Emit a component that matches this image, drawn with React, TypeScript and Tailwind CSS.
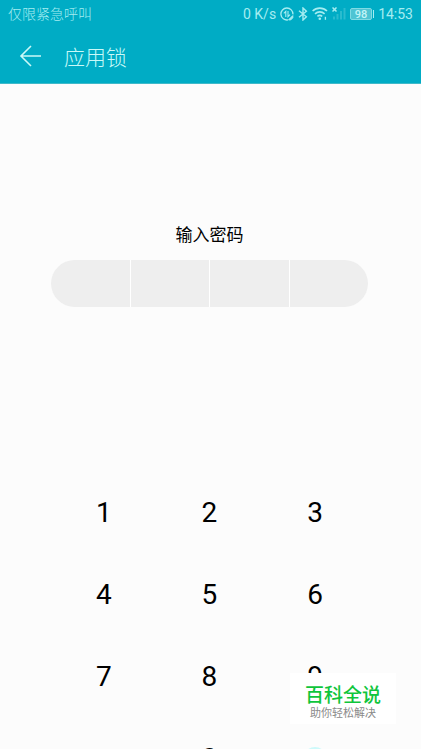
import { useState } from "react";

const DIGITS = ["1", "2", "3", "4", "5", "6", "7", "8", "9"];

const PIN_LENGTH = 4;

function DataIcon() {
  return (
    <svg width="14" height="14" viewBox="0 0 14 14" fill="none" stroke="currentColor" strokeWidth="1.3" aria-hidden="true">
      <path d="M12.9 7.4A6 6 0 1 0 8 12.9" />
      <path d="M5.8 10V4.4L3.8 6.4M8 4v5.6l2-2" strokeWidth="1.1" />
      <path d="M8.6 12.8l4.2-4.2v2.2l-2.2 2.2z" fill="currentColor" strokeWidth="1" />
    </svg>
  );
}

function BluetoothIcon() {
  return (
    <svg width="10" height="14" viewBox="0 0 10 14" fill="none" stroke="currentColor" strokeWidth="1.4" aria-hidden="true">
      <path d="M1 3.8l7.4 6L5 13V1l3.4 3.2L1 10.2" />
    </svg>
  );
}

function WifiIcon() {
  return (
    <svg width="16" height="14" viewBox="0 0 16 14" fill="none" stroke="currentColor" strokeWidth="1.6" aria-hidden="true">
      <path d="M.6 4a10.400 10.400 0 0 1 14.400 0M3 6.800a7 7 0 0 1 9.600 0M5.400 9.400a3.600 3.600 0 0 1 4.800 0" />
      <circle cx="7.8" cy="11.8" r="1.3" fill="currentColor" stroke="none" />
      <path d="M13.4 9.800v3" strokeWidth="1.3" />
    </svg>
  );
}

function SignalIcon() {
  return (
    <svg width="14" height="14" viewBox="0 0 14 14" fill="none" stroke="currentColor" aria-hidden="true">
      <path d="M.5 .5l4 4M4.500 .5l-4 4" strokeWidth="1.5" />
      <path d="M2 12.500v-3M5.500 12.500V7M9 12.500V4M12.500 12.500V1" strokeWidth="2" opacity="0.25" />
    </svg>
  );
}

function Battery({ level }: { level: number }) {
  return (
    <span className="flex items-center">
      <span className="flex h-3 w-[22px] items-center justify-center rounded-xs border border-[#7fdbe4] bg-[#4fc4d3] text-[11px] leading-none font-medium text-[#c4f5f7]">
        {level}
      </span>
      <span className="ml-px h-2 w-px bg-[#a5edf1]" />
    </span>
  );
}

export default function App() {
  const [pin, setPin] = useState("");

  const press = (digit: string) => {
    if (pin.length < PIN_LENGTH) setPin(pin + digit);
  };

  return (
    <div className="relative flex h-screen flex-col overflow-hidden bg-[#fcfcfc] font-['Roboto','Noto_Sans_CJK_SC',sans-serif] text-black">
      <header className="shrink-0 border-b border-[#3fb9c9] bg-[#00acc5]">
        <div className="flex h-7 items-center justify-between px-2 text-sm font-light text-[#a5edf1]">
          <span>仅限紧急呼叫</span>
          <div className="flex items-center gap-1 font-normal">
            <span>0 K/s</span>
            <DataIcon />
            <BluetoothIcon />
            <WifiIcon />
            <SignalIcon />
            <Battery level={98} />
            <span>14:53</span>
          </div>
        </div>
        <div className="flex h-[55px] items-center gap-[23px] px-[19px] text-[#c9f9f8]">
          <button type="button" aria-label="返回">
            <svg width="22" height="22" viewBox="0 0 22 22" fill="none" stroke="currentColor" strokeWidth="1.6" aria-hidden="true">
              <path d="M22 11H2M12 1L2 11l10 10" />
            </svg>
          </button>
          <h1 className="pt-1 text-[21px] leading-6 font-light">应用锁</h1>
        </div>
      </header>

      <main className="flex flex-col pr-[53px] pl-[51px]">
        <h2 className="mt-[139px] text-center text-[17px] leading-6">输入密码</h2>
        <div className="mt-[13px] grid h-[47px] grid-cols-4 gap-px overflow-hidden rounded-full bg-white">
          {Array.from({ length: PIN_LENGTH }, (_, i) => (
            <div key={i} className="flex items-center justify-center bg-[#eeeeee]">
              {i < pin.length && <span className="size-3 rounded-full bg-black" />}
            </div>
          ))}
        </div>

        <div className="mt-[165px] grid auto-rows-[82px] grid-cols-3 text-[28px]">
          {DIGITS.map((digit) => (
            <button key={digit} type="button" onClick={() => press(digit)}>
              {digit}
            </button>
          ))}
          <button type="button" className="col-start-2" onClick={() => press("0")}>
            0
          </button>
          <button
            type="button"
            aria-label="删除"
            className="size-6 self-center justify-self-center rounded-full bg-[#cdf9fa]"
            onClick={() => setPin(pin.slice(0, -1))}
          />
        </div>
      </main>

      <aside className="absolute right-[25px] bottom-[25px] flex h-[51px] w-[106px] flex-col items-center justify-center bg-white pt-1.5">
        <p className="text-[19px] leading-6 font-medium text-[#0fc53c]">百科全说</p>
        <p className="text-[11px] leading-3 text-[#8a8a8a]">助你轻松解决</p>
      </aside>
    </div>
  );
}
